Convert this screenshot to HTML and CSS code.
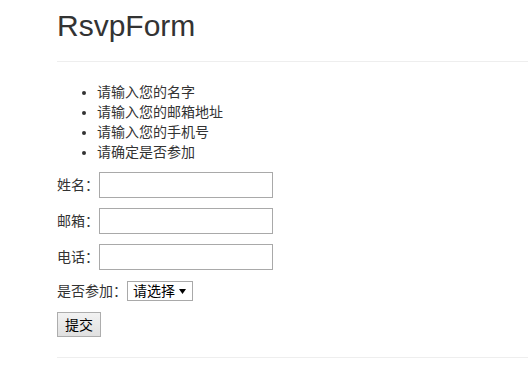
FILE: index.html
```html
<!doctype html>
<html lang="zh-CN">

<head>
	<meta charset="utf-8">
	<meta name="viewport" content="width=device-width, initial-scale=1">
	<title>RsvpForm</title>
	<link rel="stylesheet" href="styles.css">
</head>

<body>

	<div class="container">

		<h1 class="title">RsvpForm</h1>
		<hr class="line">

		<ul class="hints">
			<li>请输入您的名字</li>
			<li>请输入您的邮箱地址</li>
			<li>请输入您的手机号</li>
			<li>请确定是否参加</li>
		</ul>

		<form class="rsvp">
			<div class="rsvp-row">
				<label class="rsvp-label" for="name">姓名：</label>
				<input class="rsvp-input" id="name" type="text">
			</div>
			<div class="rsvp-row">
				<label class="rsvp-label" for="email">邮箱：</label>
				<input class="rsvp-input" id="email" type="text">
			</div>
			<div class="rsvp-row">
				<label class="rsvp-label" for="phone">电话：</label>
				<input class="rsvp-input" id="phone" type="text">
			</div>
			<div class="rsvp-row rsvp-row--select">
				<label class="rsvp-label" for="attend">是否参加：</label>
				<select class="rsvp-select" id="attend">
					<option>请选择</option>
					<option>参加</option>
					<option>不参加</option>
				</select>
			</div>
			<button class="rsvp-btn" type="button">提交</button>
		</form>

		<hr class="line line--bottom">

	</div>

</body>
</html>
```

FILE: styles.css
```css
:root {
	--font-family: 'Liberation Sans', 'Noto Sans CJK SC', sans-serif;
	--color: #333;
	--line: #eee;
	--field-border: #a9a9a9;
}

*,
::after,
::before {
	box-sizing: border-box;
	margin: 0;
	padding: 0;
}

body {
	color: var(--color);
	font: 400 14px/20px var(--font-family);
	background: #fff;
}

.container {
	padding-left: 57px;
}

/* Заголовок */

.title {
	margin-top: 9px;
	font-size: 30px;
	font-weight: 400;
	line-height: 33px;
}

.line {
	height: 0;
	margin-top: 19px;
	border: 0;
	border-top: 1px solid var(--line);
}

.line--bottom {
	margin-top: 20px;
}

/* Список подсказок */

.hints {
	margin: 20px 0 10px;
	padding-left: 40px;
}

/* Форма */

.rsvp-row {
	display: flex;
	align-items: center;
	height: 26px;
	margin-bottom: 10px;
}

.rsvp-row--select {
	height: 22px;
}

.rsvp-label {
	white-space: nowrap;
}

.rsvp-input {
	width: 174px;
	height: 26px;
	padding: 0 4px;
	font: inherit;
	border: 1px solid var(--field-border);
	outline: none;
}

.rsvp-select {
	width: 66px;
	height: 20px;
	padding: 0 12px 0 5px;
	color: #000;
	font: 14px/18px var(--font-family);
	background: #fff url('data:image/svg+xml,%3Csvg xmlns="http://www.w3.org/2000/svg" viewBox="0 0 7 5"%3E%3Cpath d="M0 0H7L3.5 5Z" fill="%23000"/%3E%3C/svg%3E') no-repeat right 6px center / 7px 5px;
	border: 1px solid var(--field-border);
	border-radius: 0;
	-webkit-appearance: none;
	-moz-appearance: none;
	appearance: none;
}

.rsvp-btn {
	display: block;
	width: 44px;
	height: 25px;
	color: #000;
	font: 14px/20px var(--font-family);
	background: linear-gradient(#f2f2f2, #e0e0e0);
	border: 1px solid #adadad;
	border-radius: 0;
}
```
